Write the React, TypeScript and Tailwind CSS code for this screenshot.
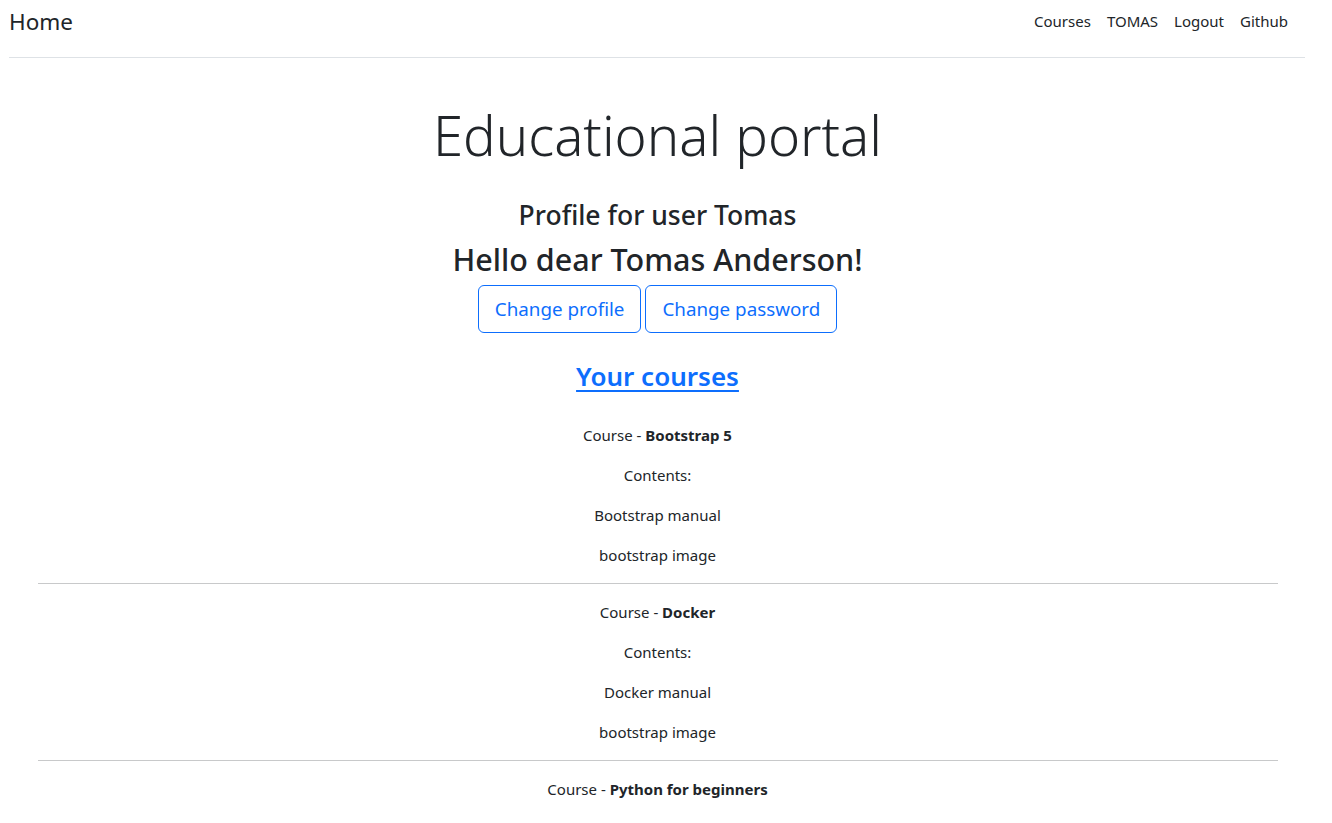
import React from 'react';

interface Course {
    title: string;
    contents: string[];
}

const courses: Course[] = [
    { title: 'Bootstrap 5', contents: ['Bootstrap manual', 'bootstrap image'] },
    { title: 'Docker', contents: ['Docker manual', 'bootstrap image'] },
    { title: 'Python for beginners', contents: ['Python manual', 'bootstrap image'] },
];

const navLinks = ['Courses', 'TOMAS', 'Logout', 'Github'];

const CourseBlock: React.FC<{ course: Course }> = ({ course }) => (
    <div className="flex flex-col items-center">
        <p className="leading-6 mb-4">
            Course - <b className="font-bold">{course.title}</b>
        </p>
        <p className="leading-6 mb-4">Contents:</p>
        {course.contents.map((item, i) => (
            <p key={i} className="leading-6 mb-4">
                {item}
            </p>
        ))}
    </div>
);

export default function App() {
    return (
        <div
            className="w-[1315px] bg-white text-[#212529] text-[15px]"
            style={{ fontFamily: '"Segoe UI", "Noto Sans", "Liberation Sans", sans-serif' }}
        >
            {/* Header */}
            <header className="ml-[9px] mr-[10px] h-[58px] flex items-start justify-between border-b border-[#dee2e6]">
                <a className="text-[22.5px] leading-[44px] text-[#212529]">Home</a>
                <nav className="flex items-center h-[42px] mr-[9px]">
                    {navLinks.map((link) => (
                        <a key={link} className="px-2 text-[#212529] leading-6">
                            {link}
                        </a>
                    ))}
                </nav>
            </header>

            <main className="flex flex-col items-center">
                <h1 className="mt-[44px] text-[54.5px] font-light leading-[67px]">Educational portal</h1>
                <h3 className="mt-[29px] text-[26.5px] font-medium leading-[34px]">Profile for user Tomas</h3>
                <h2 className="mt-[8px] text-[30.5px] font-medium leading-[38px]">Hello dear Tomas Anderson!</h2>
                <div className="mt-[7px] flex gap-[4px]">
                    <button className="h-[48px] px-4 text-[18.8px] text-[#0d6efd] border border-[#0d6efd] rounded-[6px]">
                        Change profile
                    </button>
                    <button className="h-[48px] px-4 text-[18.8px] text-[#0d6efd] border border-[#0d6efd] rounded-[6px]">
                        Change password
                    </button>
                </div>
                <h3 className="mt-[26px] text-[26px] font-semibold leading-[34px]">
                    <a className="text-[#0d6efd] underline underline-offset-[4px]">Your courses</a>
                </h3>

                <div className="mt-[30px] w-[1240px] flex flex-col">
                    {courses.map((course, i) => (
                        <React.Fragment key={course.title}>
                            {i > 0 && <hr className="border-t border-[#c8c9ca] mb-4" />}
                            <CourseBlock course={course} />
                        </React.Fragment>
                    ))}
                </div>
            </main>
        </div>
    );
}
